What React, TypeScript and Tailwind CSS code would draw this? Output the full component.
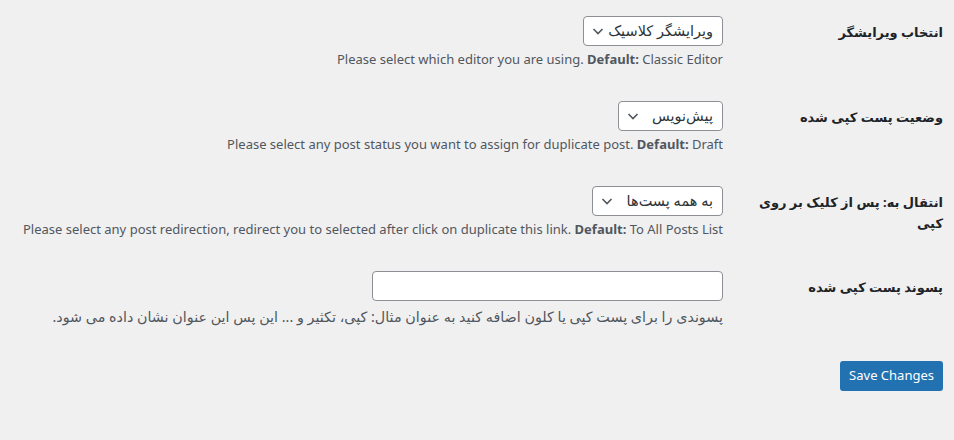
import type { ReactNode } from "react";

const font = { fontFamily: '"Noto Sans", "DejaVu Sans", sans-serif' };

function Chevron() {
  return (
    <svg viewBox="0 0 16 16" className="h-[16px] w-[16px] shrink-0" fill="none" stroke="#50575e" strokeWidth="1.6">
      <path d="M3.5 6l4.5 4.5 4.5-4.5" />
    </svg>
  );
}

function Select({ value, width }: { value: string; width: string }) {
  return (
    <div
      className={`flex h-[30px] items-center justify-between rounded-[4px] border border-[#8c8f94] bg-white pl-[6px] pr-[9px] text-[14.5px] text-[#2c3338] ${width}`}
    >
      <span className="whitespace-nowrap">{value}</span>
      <Chevron />
    </div>
  );
}

function Row({ label, children }: { label: ReactNode; children: ReactNode }) {
  return (
    <div className="flex">
      <div className="w-[210px] shrink-0 whitespace-nowrap pl-[10px] pt-[21px] pb-[20px] text-[13px] font-bold leading-[21px] text-[#1d2327]">
        {label}
      </div>
      <div className="flex-1 px-[10px] pt-[15px] pb-[16.5px]">{children}</div>
    </div>
  );
}

function Desc({ children }: { children: ReactNode }) {
  return (
    <p dir="ltr" className="mt-[4px] text-right text-[13px] leading-[19.5px] text-[#50575e]">
      {children}
    </p>
  );
}

export default function App() {
  return (
    <div dir="rtl" style={font} className="min-h-[440px] bg-[#f0f0f1] pt-px pr-[11px] pl-[10px]">
      <Row label="انتخاب ویرایشگر">
        <Select value="ویرایشگر کلاسیک" width="w-[140px]" />
        <Desc>
          Please select which editor you are using. <strong>Default:</strong> Classic Editor
        </Desc>
      </Row>
      <Row label="وضعیت پست کپی شده">
        <Select value="پیش‌نویس" width="w-[105px]" />
        <Desc>
          Please select any post status you want to assign for duplicate post. <strong>Default:</strong> Draft
        </Desc>
      </Row>
      <Row
        label={
          <>
            انتقال به: پس از کلیک بر روی
            <br />
            کپی
          </>
        }
      >
        <Select value="به همه پست‌ها" width="w-[131px]" />
        <Desc>
          Please select any post redirection, redirect you to selected after click on duplicate this link.{" "}
          <strong>Default:</strong> To All Posts List
        </Desc>
      </Row>
      <Row label="پسوند پست کپی شده">
        <div className="h-[30px] w-[351px] rounded-[4px] border border-[#8c8f94] bg-white" />
        <p className="mt-[6px] text-[14.3px] leading-[20px] text-[#50575e]">
          پسوندی را برای پست کپی یا کلون اضافه کنید به عنوان مثال: کپی، تکثیر و ... این پس این عنوان نشان داده می شود.
        </p>
      </Row>
      <div className="pt-[17px]">
        <button className="h-[30px] rounded-[3px] bg-[#2271b1] px-[9px] text-[13px] text-white" style={font}>
          Save Changes
        </button>
      </div>
    </div>
  );
}
